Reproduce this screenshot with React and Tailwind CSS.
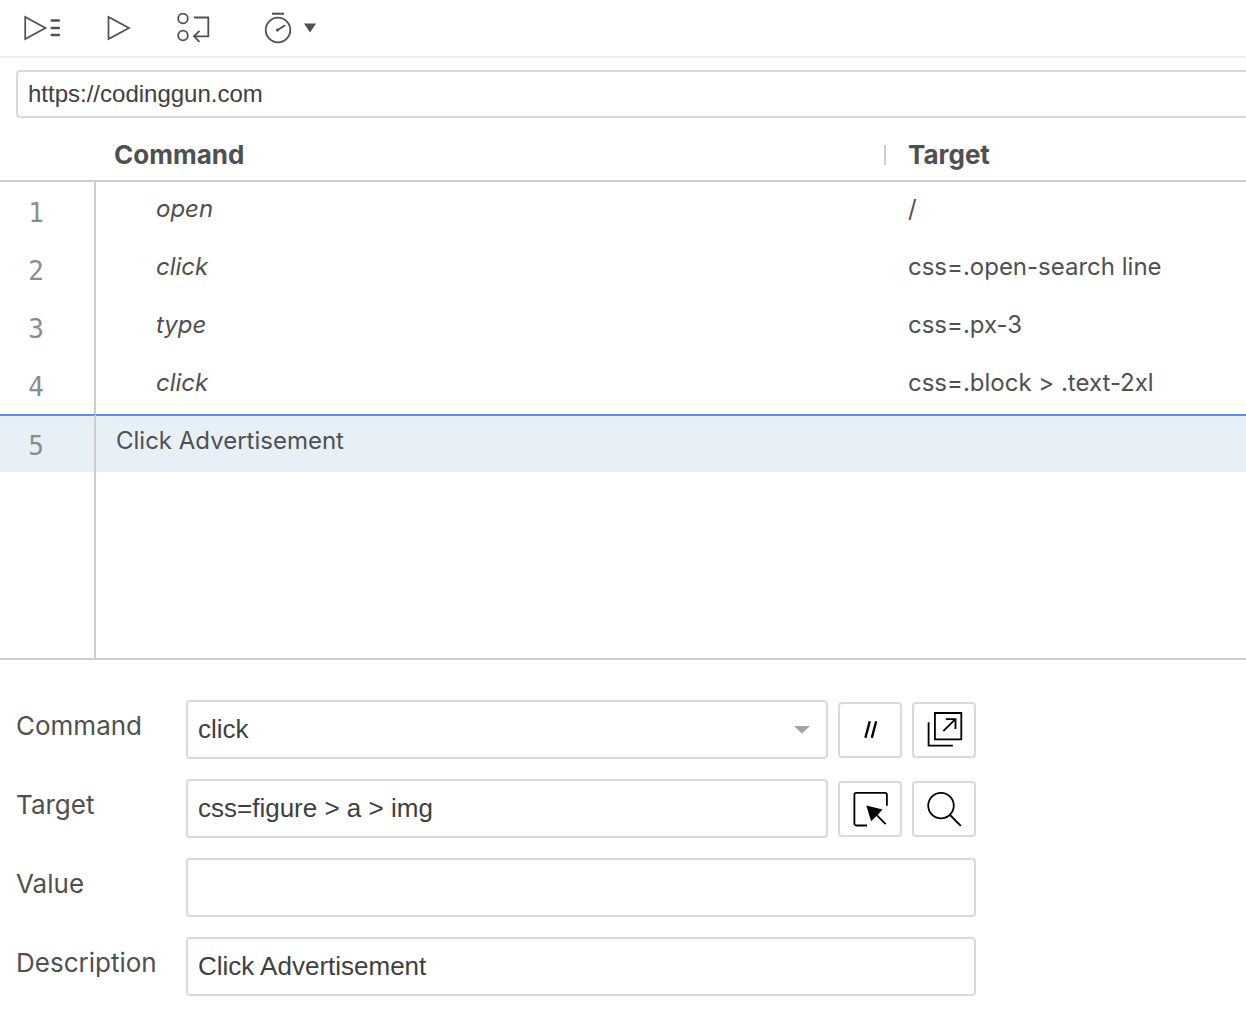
import React, { useState } from 'react';

const STEPS = [
  { command: 'open', target: '/' },
  { command: 'click', target: 'css=.open-search line' },
  { command: 'type', target: 'css=.px-3' },
  { command: 'click', target: 'css=.block > .text-2xl' },
  { comment: 'Click Advertisement' },
];

const COMMANDS = ['click', 'open', 'type'];

const FIELD =
  'h-[59px] w-full min-w-0 rounded border-2 border-[#dadada] bg-white px-2.5 font-["Liberation_Sans",sans-serif] text-[26px] text-[#404040] outline-none';
const ICON_BUTTON =
  'flex h-14 w-16 shrink-0 items-center justify-center rounded border-2 border-[#dadada] bg-white text-black';

function Toolbar() {
  return (
    <div className="flex h-[58px] items-center border-b-2 border-[#f0f0f0] pl-6 text-[#505050]">
      <button type="button" aria-label="Run all tests" className="mr-[46px]">
        <svg width="37" height="30" viewBox="0 0 37 30" fill="none" stroke="currentColor">
          <path d="M1.2 4v22L21.5 15z" strokeWidth="1.7" />
          <path d="M27.8 7.5h7M27.8 15h7M27.8 22h7" strokeWidth="2.6" strokeLinecap="round" />
        </svg>
      </button>
      <button type="button" aria-label="Run current test" className="mr-[46px]">
        <svg width="24" height="30" viewBox="0 0 24 30" fill="none" stroke="currentColor">
          <path d="M1.5 4v22L22 15z" strokeWidth="1.7" />
        </svg>
      </button>
      <button type="button" aria-label="Step over" className="mr-[53px]">
        <svg width="34" height="30" viewBox="0 0 34 30" fill="none" stroke="currentColor" strokeWidth="1.8">
          <circle cx="6" cy="5.5" r="4.8" />
          <circle cx="6" cy="22.5" r="4.8" />
          <path d="M17 4.5h14.3v18.8H17.5M22.5 17.8L17 23.3l5.5 5.5" />
        </svg>
      </button>
      <button type="button" aria-label="Test execution speed" className="flex items-center gap-3">
        <svg width="28" height="32" viewBox="0 0 28 32" fill="none" stroke="currentColor">
          <circle cx="14" cy="18" r="12.3" strokeWidth="1.8" />
          <path d="M8 1.7h12" strokeWidth="2" />
          <path d="M13.5 18l7.8-4.8" strokeWidth="1.6" />
          <circle cx="13.5" cy="18" r="1.6" fill="currentColor" stroke="none" />
        </svg>
        <svg width="12" height="10" viewBox="0 0 12 10" fill="currentColor">
          <path d="M0 .5h12L6 9.5z" />
        </svg>
      </button>
    </div>
  );
}

function StepRow({ number, step }) {
  const isComment = Boolean(step.comment);
  const edge = isComment ? 'border-t-2 border-t-[#5c8df2]' : '';

  return (
    <tr className={isComment ? 'h-[58px] bg-[#e8f0f7]' : 'h-[58px]'}>
      <td
        className={`border-r-2 border-r-[#cdcdcd] pt-1 pr-[22px] text-center font-['DejaVu_Sans_Mono',monospace] text-[26px] leading-8 text-[#8c8c8c] ${edge}`}
      >
        {number}
      </td>
      {isComment ? (
        <td colSpan={2} className={`pb-1.5 pl-5 text-2xl ${edge}`}>{step.comment}</td>
      ) : (
        <>
          <td className="pb-1 pl-[60px] text-2xl italic">{step.command}</td>
          <td className="pb-1 pl-[22px] text-2xl">{step.target}</td>
        </>
      )}
    </tr>
  );
}

function StepTable() {
  return (
    <table className="w-full table-fixed border-separate border-spacing-0 text-left">
      <colgroup>
        <col className="w-24" />
        <col className="w-[63.4%]" />
        <col />
      </colgroup>
      <thead>
        <tr className="h-16 text-[26px] leading-5 font-bold">
          <th aria-label="Step" className="border-b-2 border-[#cdcdcd]" />
          <th className="border-b-2 border-[#cdcdcd] pt-3 pl-[18px]">
            <div className="border-r-2 border-[#cdcdcd]">Command</div>
          </th>
          <th className="border-b-2 border-[#cdcdcd] pt-3 pl-[22px]">Target</th>
        </tr>
      </thead>
      <tbody>
        {STEPS.map((step, i) => (
          <StepRow key={i} number={i + 1} step={step} />
        ))}
      </tbody>
    </table>
  );
}

function Row({ id, label, children }) {
  return (
    <div className="flex">
      <label htmlFor={id} className="w-[170px] shrink-0 text-[26px] leading-[52px]">
        {label}
      </label>
      <div className="flex min-w-0 flex-1 items-center gap-2.5">{children}</div>
    </div>
  );
}

function StepEditor() {
  const [command, setCommand] = useState('click');

  return (
    <form className="flex max-w-[992px] flex-col gap-5 px-4 pt-10 pb-8">
      <Row id="command" label="Command">
        <div className="relative min-w-0 flex-1">
          <select
            id="command"
            value={command}
            onChange={(e) => setCommand(e.target.value)}
            className={`${FIELD} appearance-none`}
          >
            {COMMANDS.map((name) => (
              <option key={name}>{name}</option>
            ))}
          </select>
          <svg
            className="pointer-events-none absolute top-[26px] right-[18px] text-[#a3a3a3]"
            width="16"
            height="8"
            viewBox="0 0 16 8"
            fill="currentColor"
          >
            <path d="M0 0h16L8 7.6z" />
          </svg>
        </div>
        <button type="button" aria-label="Disable command" className={ICON_BUTTON}>
          <svg width="16" height="18" viewBox="0 0 16 18" fill="none" stroke="currentColor" strokeWidth="2.4">
            <path d="M3.4 16.7L7.8 .3M9.8 16.7L14.2 .3" />
          </svg>
        </button>
        <button type="button" aria-label="Open in new window" className={ICON_BUTTON}>
          <svg width="38" height="36" viewBox="0 0 38 36" fill="none" stroke="currentColor" strokeWidth="1.8">
            <path d="M9.9 1h26.4v26.3H9.9zM3.6 10.2v23.4h24.2M18.3 19.2L30.3 7.2M20.8 7.1h9.7v9.8" />
          </svg>
        </button>
      </Row>
      <Row id="target" label="Target">
        <input id="target" type="text" defaultValue="css=figure > a > img" className={FIELD} />
        <button type="button" aria-label="Select target in page" className={ICON_BUTTON}>
          <svg width="36" height="36" viewBox="0 0 36 36" fill="none" stroke="currentColor" strokeWidth="1.8">
            <path d="M15 34.5H4.2a1.8 1.8 0 0 1-1.8-1.8V3.7a1.8 1.8 0 0 1 1.8-1.8h28.9a1.8 1.8 0 0 1 1.8 1.8v11" />
            <path d="M14.3 14.5l16.2 4-5 5.4-6.4 6.3z" fill="currentColor" stroke="none" />
            <path d="M23 22.4l10.7 10.8" />
          </svg>
        </button>
        <button type="button" aria-label="Find target in page" className={ICON_BUTTON}>
          <svg width="36" height="36" viewBox="0 0 36 36" fill="none" stroke="currentColor" strokeWidth="1.8">
            <circle cx="15" cy="14.6" r="12.8" />
            <path d="M24 24L34.8 34.8" />
          </svg>
        </button>
      </Row>
      <Row id="value" label="Value">
        <input id="value" type="text" className={FIELD} />
      </Row>
      <Row id="description" label="Description">
        <input id="description" type="text" defaultValue="Click Advertisement" className={FIELD} />
      </Row>
    </form>
  );
}

export default function App() {
  return (
    <div className="flex min-h-screen flex-col overflow-x-hidden bg-white font-[Inter,sans-serif] text-[#505050]">
      <Toolbar />
      <div className="flex pt-3 pl-4">
        <input
          type="text"
          aria-label="Base URL"
          defaultValue="https://codinggun.com"
          className="h-12 min-w-0 flex-1 rounded-l border-2 border-r-0 border-[#dadada] pl-2.5 font-['Liberation_Sans',sans-serif] text-2xl text-[#404040] outline-none"
        />
      </div>
      <div className="flex flex-1 flex-col border-b-2 border-[#cdcdcd]">
        <StepTable />
        <div className="w-24 flex-1 border-r-2 border-[#cdcdcd]" />
      </div>
      <StepEditor />
    </div>
  );
}
